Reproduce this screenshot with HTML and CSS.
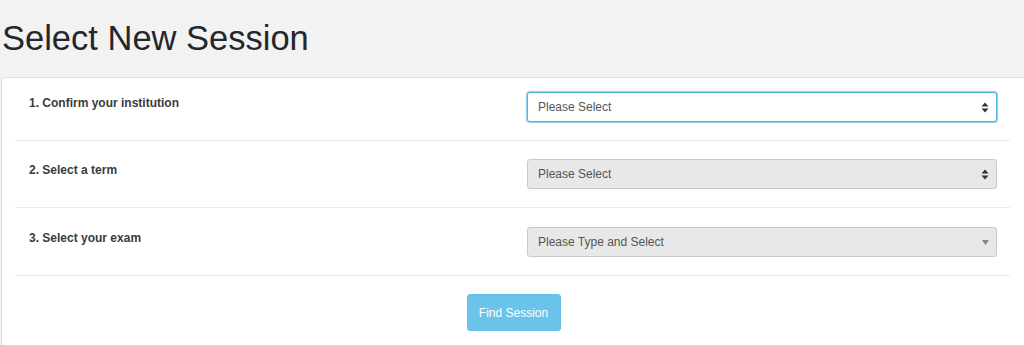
FILE: index.html
```html
<!DOCTYPE html>
<html lang="en">
<head>
<meta charset="utf-8">
<title>Select New Session</title>
<link rel="stylesheet" href="styles.css">
</head>
<body>
<h1 class="page-title">Select New Session</h1>
<div class="card">
  <div class="rows">
    <div class="row row-first">
      <label class="row-label">1. Confirm your institution</label>
      <div class="field">
        <div class="select select-focus">
          <span class="select-text">Please Select</span>
          <svg class="arrow-updown" width="8" height="11" viewBox="0 0 8 11"><path d="M4 0.5 L7.5 4.5 H0.5 Z M4 10.5 L7.5 6.5 H0.5 Z" fill="#333"/></svg>
        </div>
      </div>
    </div>
    <div class="row">
      <label class="row-label">2. Select a term</label>
      <div class="field">
        <div class="select select-disabled">
          <span class="select-text">Please Select</span>
          <svg class="arrow-updown" width="8" height="11" viewBox="0 0 8 11"><path d="M4 0.5 L7.5 4.5 H0.5 Z M4 10.5 L7.5 6.5 H0.5 Z" fill="#333"/></svg>
        </div>
      </div>
    </div>
    <div class="row row-last">
      <label class="row-label">3. Select your exam</label>
      <div class="field">
        <div class="select select-disabled">
          <span class="select-text">Please Type and Select</span>
          <svg class="arrow-down" width="7" height="5" viewBox="0 0 7 5"><path d="M0 0 H7 L3.5 5 Z" fill="#888"/></svg>
        </div>
      </div>
    </div>
  </div>
  <div class="actions">
    <button class="btn-find" type="button">Find Session</button>
  </div>
</div>
</body>
</html>
```
FILE: styles.css
```css
html, body {
  margin: 0;
  padding: 0;
  overflow: hidden;
}
body {
  background: #f2f2f2;
  font-family: "Liberation Sans", Arial, sans-serif;
  color: #333;
  height: 345px;
}
.page-title {
  margin: 0;
  padding: 14px 0 0 2px;
  font-size: 34.5px;
  line-height: 48px;
  font-weight: normal;
  color: #24272b;
  height: 63px;
}
.card {
  margin-left: 1px;
  width: 1025px;
  box-sizing: border-box;
  background: #fff;
  border: 1px solid #dedede;
  border-radius: 4px;
  height: 300px;
}
.rows {
  margin-left: 13px;
  width: 995px;
}
.row {
  display: flex;
  padding: 18px 0 18px;
  border-bottom: 1px solid #ececec;
}
.row-first {
  padding-top: 14px;
}
.row-last {
  padding-top: 19px;
  padding-bottom: 18px;
}
.row-label {
  width: 512px;
  box-sizing: border-box;
  padding-left: 14px;
  padding-top: 2px;
  font-size: 12px;
  font-weight: bold;
  color: #3a3b3e;
  line-height: 18px;
}
.field {
  width: 470px;
}
.select {
  position: relative;
  height: 30px;
  box-sizing: border-box;
  border: 1px solid #c9c9c9;
  border-radius: 3px;
  padding: 0 10px;
  display: flex;
  align-items: center;
  font-size: 12px;
  color: #555;
}
.select-focus {
  background: #fff;
  border-color: #4fb5df;
  box-shadow: 0 0 1px 1px rgba(90, 190, 230, 0.7);
}
.select-disabled {
  background: #e8e8e8;
}
.arrow-updown {
  position: absolute;
  right: 7px;
  top: 9px;
}
.arrow-down {
  position: absolute;
  right: 7px;
  top: 12px;
}
.actions {
  display: flex;
  justify-content: center;
  padding-top: 18px;
}
.btn-find {
  width: 94px;
  height: 37px;
  background: #6ac4e9;
  border: 1px solid #66c0e6;
  border-radius: 3px;
  color: #fff;
  font-family: "Liberation Sans", Arial, sans-serif;
  font-size: 12px;
  padding: 0;
}
```
